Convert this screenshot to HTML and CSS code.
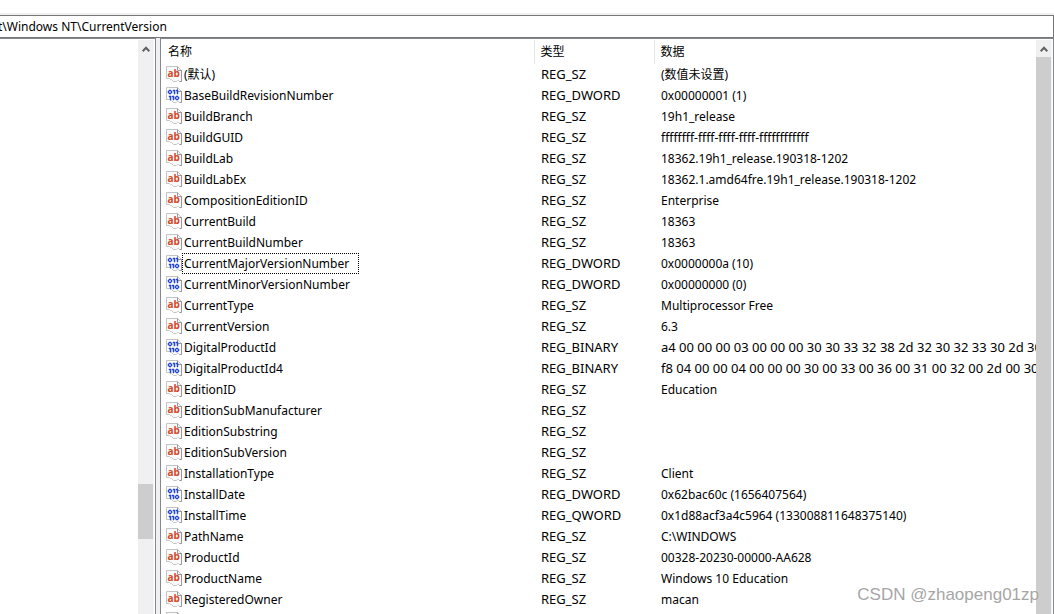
FILE: index.html
```html
<!DOCTYPE html>
<html lang="zh-CN">
<head>
<meta charset="utf-8">
<title>CurrentVersion</title>
<link rel="stylesheet" href="styles.css">
</head>
<body>
<svg class="defs" aria-hidden="true">
  <symbol id="page" viewBox="0 0 16 16">
    <path d="M.5 .5H11.5L15.5 4.5V15.5H13.5L12.5 14.5H11.5L10.5 15.5H7.5L5.5 13.5H4.5L3.5 12.5H.5Z" fill="#fafafa" stroke="#c4c4c4"/>
    <path d="M11.5 .5V4.5H15.5M15.5 4V15.5H13.5" fill="none" stroke="#999"/>
  </symbol>
  <symbol id="sz" viewBox="0 0 16 16">
    <use href="#page"/>
    <text x="1.5" y="11" class="ab">ab</text>
  </symbol>
  <symbol id="bin" viewBox="0 0 16 16">
    <use href="#page"/>
    <path d="M3 3h2v1H3zM3 6h2v1H3zM2 4h1v2H2zM5 4h1v2H5zM7 3h2v4H8V4H7zM10 3h2v4h-1V4h-1zM3 9h2v4H4v-3H3zM6 9h2v4H7v-3H6zM10 9h2v1h-2zM10 12h2v1h-2zM9 10h1v2H9zM12 10h1v2h-1z" fill="#2347d8" stroke="#2347d8" stroke-width=".5"/>
  </symbol>
</svg>
<div class="window">
  <div class="menu"></div>
  <div class="address"><span>t\Windows NT\CurrentVersion</span></div>
  <main class="panes">
    <section class="tree">
      <div class="scroll">
        <button class="up" aria-label="向上滚动"><svg viewBox="0 0 8 6"><path d="M.7 5.2L4 1.8 7.3 5.2" /></svg></button>
        <div class="track"></div><div class="thumb"></div><div class="rest"></div>
      </div>
    </section>
    <section class="values">
      <div class="list">
        <table>
          <colgroup><col class="c-name"><col class="c-type"><col></colgroup>
          <thead><tr><th>名称</th><th>类型</th><th>数据</th></tr></thead>
          <tbody>
            <tr><td><svg><use href="#sz"/></svg><span>(默认)</span></td><td>REG_SZ</td><td>(数值未设置)</td></tr>
            <tr><td><svg><use href="#bin"/></svg><span>BaseBuildRevisionNumber</span></td><td>REG_DWORD</td><td>0x00000001 (1)</td></tr>
            <tr><td><svg><use href="#sz"/></svg><span>BuildBranch</span></td><td>REG_SZ</td><td>19h1_release</td></tr>
            <tr><td><svg><use href="#sz"/></svg><span>BuildGUID</span></td><td>REG_SZ</td><td>ffffffff-ffff-ffff-ffff-ffffffffffff</td></tr>
            <tr><td><svg><use href="#sz"/></svg><span>BuildLab</span></td><td>REG_SZ</td><td>18362.19h1_release.190318-1202</td></tr>
            <tr><td><svg><use href="#sz"/></svg><span>BuildLabEx</span></td><td>REG_SZ</td><td>18362.1.amd64fre.19h1_release.190318-1202</td></tr>
            <tr><td><svg><use href="#sz"/></svg><span>CompositionEditionID</span></td><td>REG_SZ</td><td>Enterprise</td></tr>
            <tr><td><svg><use href="#sz"/></svg><span>CurrentBuild</span></td><td>REG_SZ</td><td>18363</td></tr>
            <tr><td><svg><use href="#sz"/></svg><span>CurrentBuildNumber</span></td><td>REG_SZ</td><td>18363</td></tr>
            <tr><td><svg><use href="#bin"/></svg><span class="focused">CurrentMajorVersionNumber</span></td><td>REG_DWORD</td><td>0x0000000a (10)</td></tr>
            <tr><td><svg><use href="#bin"/></svg><span>CurrentMinorVersionNumber</span></td><td>REG_DWORD</td><td>0x00000000 (0)</td></tr>
            <tr><td><svg><use href="#sz"/></svg><span>CurrentType</span></td><td>REG_SZ</td><td>Multiprocessor Free</td></tr>
            <tr><td><svg><use href="#sz"/></svg><span>CurrentVersion</span></td><td>REG_SZ</td><td>6.3</td></tr>
            <tr><td><svg><use href="#bin"/></svg><span>DigitalProductId</span></td><td>REG_BINARY</td><td class="bytes">a4 00 00 00 03 00 00 00 30 30 33 32 38 2d 32 30 32 33 30 2d 30</td></tr>
            <tr><td><svg><use href="#bin"/></svg><span>DigitalProductId4</span></td><td>REG_BINARY</td><td class="bytes">f8 04 00 00 04 00 00 00 30 00 33 00 36 00 31 00 32 00 2d 00 30</td></tr>
            <tr><td><svg><use href="#sz"/></svg><span>EditionID</span></td><td>REG_SZ</td><td>Education</td></tr>
            <tr><td><svg><use href="#sz"/></svg><span>EditionSubManufacturer</span></td><td>REG_SZ</td><td></td></tr>
            <tr><td><svg><use href="#sz"/></svg><span>EditionSubstring</span></td><td>REG_SZ</td><td></td></tr>
            <tr><td><svg><use href="#sz"/></svg><span>EditionSubVersion</span></td><td>REG_SZ</td><td></td></tr>
            <tr><td><svg><use href="#sz"/></svg><span>InstallationType</span></td><td>REG_SZ</td><td>Client</td></tr>
            <tr><td><svg><use href="#bin"/></svg><span>InstallDate</span></td><td>REG_DWORD</td><td>0x62bac60c (1656407564)</td></tr>
            <tr><td><svg><use href="#bin"/></svg><span>InstallTime</span></td><td>REG_QWORD</td><td>0x1d88acf3a4c5964 (133008811648375140)</td></tr>
            <tr><td><svg><use href="#sz"/></svg><span>PathName</span></td><td>REG_SZ</td><td>C:\WINDOWS</td></tr>
            <tr><td><svg><use href="#sz"/></svg><span>ProductId</span></td><td>REG_SZ</td><td>00328-20230-00000-AA628</td></tr>
            <tr><td><svg><use href="#sz"/></svg><span>ProductName</span></td><td>REG_SZ</td><td>Windows 10 Education</td></tr>
            <tr><td><svg><use href="#sz"/></svg><span>RegisteredOwner</span></td><td>REG_SZ</td><td>macan</td></tr>
            <tr><td><svg><use href="#page"/></svg></td><td></td><td></td></tr>
          </tbody>
        </table>
      </div>
      <div class="scroll">
        <button class="up" aria-label="向上滚动"><svg viewBox="0 0 8 6"><path d="M.7 5.2L4 1.8 7.3 5.2" /></svg></button>
        <div class="thumb long"></div>
      </div>
    </section>
  </main>
  <div class="watermark">CSDN @zhaopeng01zp</div>
</div>
</body>
</html>
```
FILE: styles.css
```css
* { box-sizing: border-box; }
body {
  margin: 0;
  font: 12px/20px "Noto Sans", "Noto Sans CJK SC", sans-serif;
  font-variant-ligatures: none;
  color: #000;
  background: #fff;
}
.defs { position: absolute; width: 0; height: 0; }
.window {
  position: relative;
  display: flex;
  flex-direction: column;
  height: 100vh;
  overflow: hidden;
}
.menu { flex: none; height: 15px; border-bottom: 2px solid #f0f0f0; }
.address {
  flex: none;
  height: 23px;
  display: flex;
  align-items: center;
  border: 1px solid #767676;
  border-left: 0;
  overflow: hidden;
}
.address span { margin-left: -2px; white-space: pre; }
.panes {
  flex: 1;
  min-height: 0;
  display: grid;
  grid-template-columns: 156px minmax(0, 1fr);
  column-gap: 4px;
  background: #f0f0f0;
}
.tree, .values {
  display: flex;
  min-height: 0;
  background: #fff;
  border: 1px solid #828790;
  border-bottom: 0;
  padding: 1px 1px 0 0;
  overflow: hidden;
}
.tree { border-left: 0; justify-content: flex-end; }
.list { flex: 1; min-width: 0; overflow: hidden; }
.scroll {
  flex: none;
  width: 16px;
  display: flex;
  flex-direction: column;
  background: #f0f0f0;
  border-right: 1px solid #f6f6f6;
}
.up {
  flex: none;
  height: 17px;
  padding: 0;
  border: 0;
  background: none;
  display: flex;
  align-items: center;
  justify-content: center;
}
.up svg { width: 8px; height: 6px; fill: none; stroke: #606060; stroke-width: 2; }
.track { flex: 427; }
.thumb { flex: 55; background: #cdcdcd; }
.rest { flex: 75; }
.long { flex: 1; }
table { width: 100%; table-layout: fixed; border-collapse: collapse; }
.c-name { width: 373px; }
.c-type { width: 120px; }
th {
  height: 24px;
  padding: 0 6px;
  text-align: left;
  font-weight: 400;
  border-right: 1px solid #e5e5e5;
}
th:first-child { padding-left: 7px; }
th:last-child { border-right: 0; }
td {
  height: 21px;
  padding: 0 0 0 7px;
  line-height: 19px;
  white-space: nowrap;
  overflow: hidden;
}
td:first-child { display: flex; align-items: center; padding-left: 5px; }
td:nth-child(2), .bytes { font-size: 13px; }
td svg { flex: none; width: 16px; height: 16px; margin-bottom: 1px; }
td span { padding: 0 1px; border: 1px solid transparent; }
td .focused { border: 1px dotted #000; padding-right: 9px; }
.ab { font: 700 10px "Open Sans", sans-serif; fill: #d2492a; }
.watermark {
  position: absolute;
  right: 15px;
  bottom: 8px;
  font: 17px/22px "Liberation Sans", sans-serif;
  color: #a6a6a6;
  text-shadow: -1px -1px 0 #fff;
}
```
